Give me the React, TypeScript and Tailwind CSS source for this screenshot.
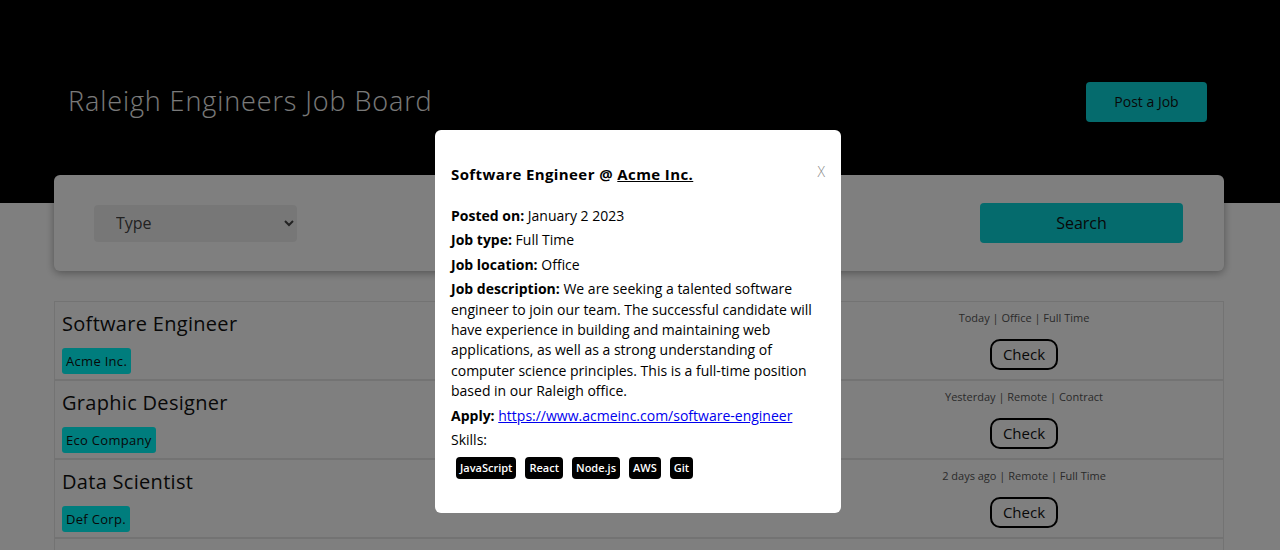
const jobs = [
  { title: 'Software Engineer', company: 'Acme Inc.', meta: ['Today', 'Office', 'Full Time'] },
  { title: 'Graphic Designer', company: 'Eco Company', meta: ['Yesterday', 'Remote', 'Contract'] },
  { title: 'Data Scientist', company: 'Def Corp.', meta: ['2 days ago', 'Remote', 'Full Time'] },
  { title: 'Product Manager', company: 'Ghi Ltd.', meta: ['3 days ago', 'Office', 'Full Time'] },
];

const skills = ['JavaScript', 'React', 'Node.js', 'AWS', 'Git'];

function JobRow({ job }: { job: (typeof jobs)[number] }) {
  return (
    <li className="flex h-[79px] border border-[#e6e6e6] pl-[7px]">
      <div className="flex-1 pt-2">
        <h2 className="text-[20px] leading-7 tracking-[0.3px] text-[#111]">{job.title}</h2>
        <span className="mt-2.5 inline-block h-[26px] rounded-[3px] bg-[#00fafa] px-1 text-[13px] leading-[26px] tracking-[0.3px] text-[#111]">
          {job.company}
        </span>
      </div>
      <div className="flex w-[398px] flex-col items-center pt-2">
        <p className="text-[11px] leading-4 text-[#555]">{job.meta.join(' | ')}</p>
        <button className="mt-[13px] h-[31px] w-[68px] rounded-[10px] border-2 border-black text-[15px] text-[#111]">
          Check
        </button>
      </div>
    </li>
  );
}

export default function App() {
  return (
    <div className="relative min-h-screen bg-white font-['Open_Sans',sans-serif]">
      <header className="flex h-[203px] items-center justify-between bg-black pl-[68px] pr-[73px]">
        <h1 className="text-[27px] font-light tracking-[0.9px] text-[#f4f4f4]">Raleigh Engineers Job Board</h1>
        <button className="h-10 w-[121px] rounded bg-[#0bd6da] text-sm text-[#111]">Post a Job</button>
      </header>

      <main className="ml-[54px] w-[1170px]">
        <div className="-mt-[28px] flex h-24 items-center justify-between rounded-md bg-white pl-10 pr-[41px] shadow-[0_2px_8px_rgba(0,0,0,0.35)]">
          <select className="h-[37px] w-[203px] rounded bg-[#efefef] px-[18px] text-base text-[#444]">
            <option>Type</option>
          </select>
          <button className="h-10 w-[203px] rounded bg-[#0bd6da] text-base text-[#111]">Search</button>
        </div>

        <ul className="mt-[30px]">
          {jobs.map((job) => (
            <JobRow key={job.title} job={job} />
          ))}
        </ul>
      </main>

      {/* modal */}
      <div className="fixed inset-0 z-10 bg-black/50" />
      <div className="absolute left-[435px] top-[130px] z-20 w-[406px] rounded-md bg-white px-4 pb-[34px] pt-[33px] text-sm text-black">
        <div className="flex items-center justify-between">
          <h3 className="text-[15px] font-bold leading-[22px] tracking-[0.4px]">
            Software Engineer @ <a href="#" className="underline">Acme Inc.</a>
          </h3>
          <button className="-mt-1 text-[14px] font-light text-[#888]">X</button>
        </div>
        <div className="mt-[21px] leading-[20.4px] [&>p]:mb-1">
          <p><b>Posted on:</b> January 2 2023</p>
          <p><b>Job type:</b> Full Time</p>
          <p><b>Job location:</b> Office</p>
          <p>
            <b>Job description:</b> We are seeking a talented software engineer to join our team. The successful
            candidate will have experience in building and maintaining web applications, as well as a strong
            understanding of computer science principles. This is a full-time position based in our Raleigh office.
          </p>
          <p>
            <b>Apply:</b>{' '}
            <a href="#" className="text-[#0000ee] underline">https://www.acmeinc.com/software-engineer</a>
          </p>
          <p>Skills:</p>
        </div>
        <div className="ml-[5px] mt-[7px] flex gap-[9px]">
          {skills.map((s) => (
            <span key={s} className="h-[22px] rounded bg-black px-1 text-[11px] font-semibold leading-[22px] text-white">
              {s}
            </span>
          ))}
        </div>
      </div>
    </div>
  );
}
